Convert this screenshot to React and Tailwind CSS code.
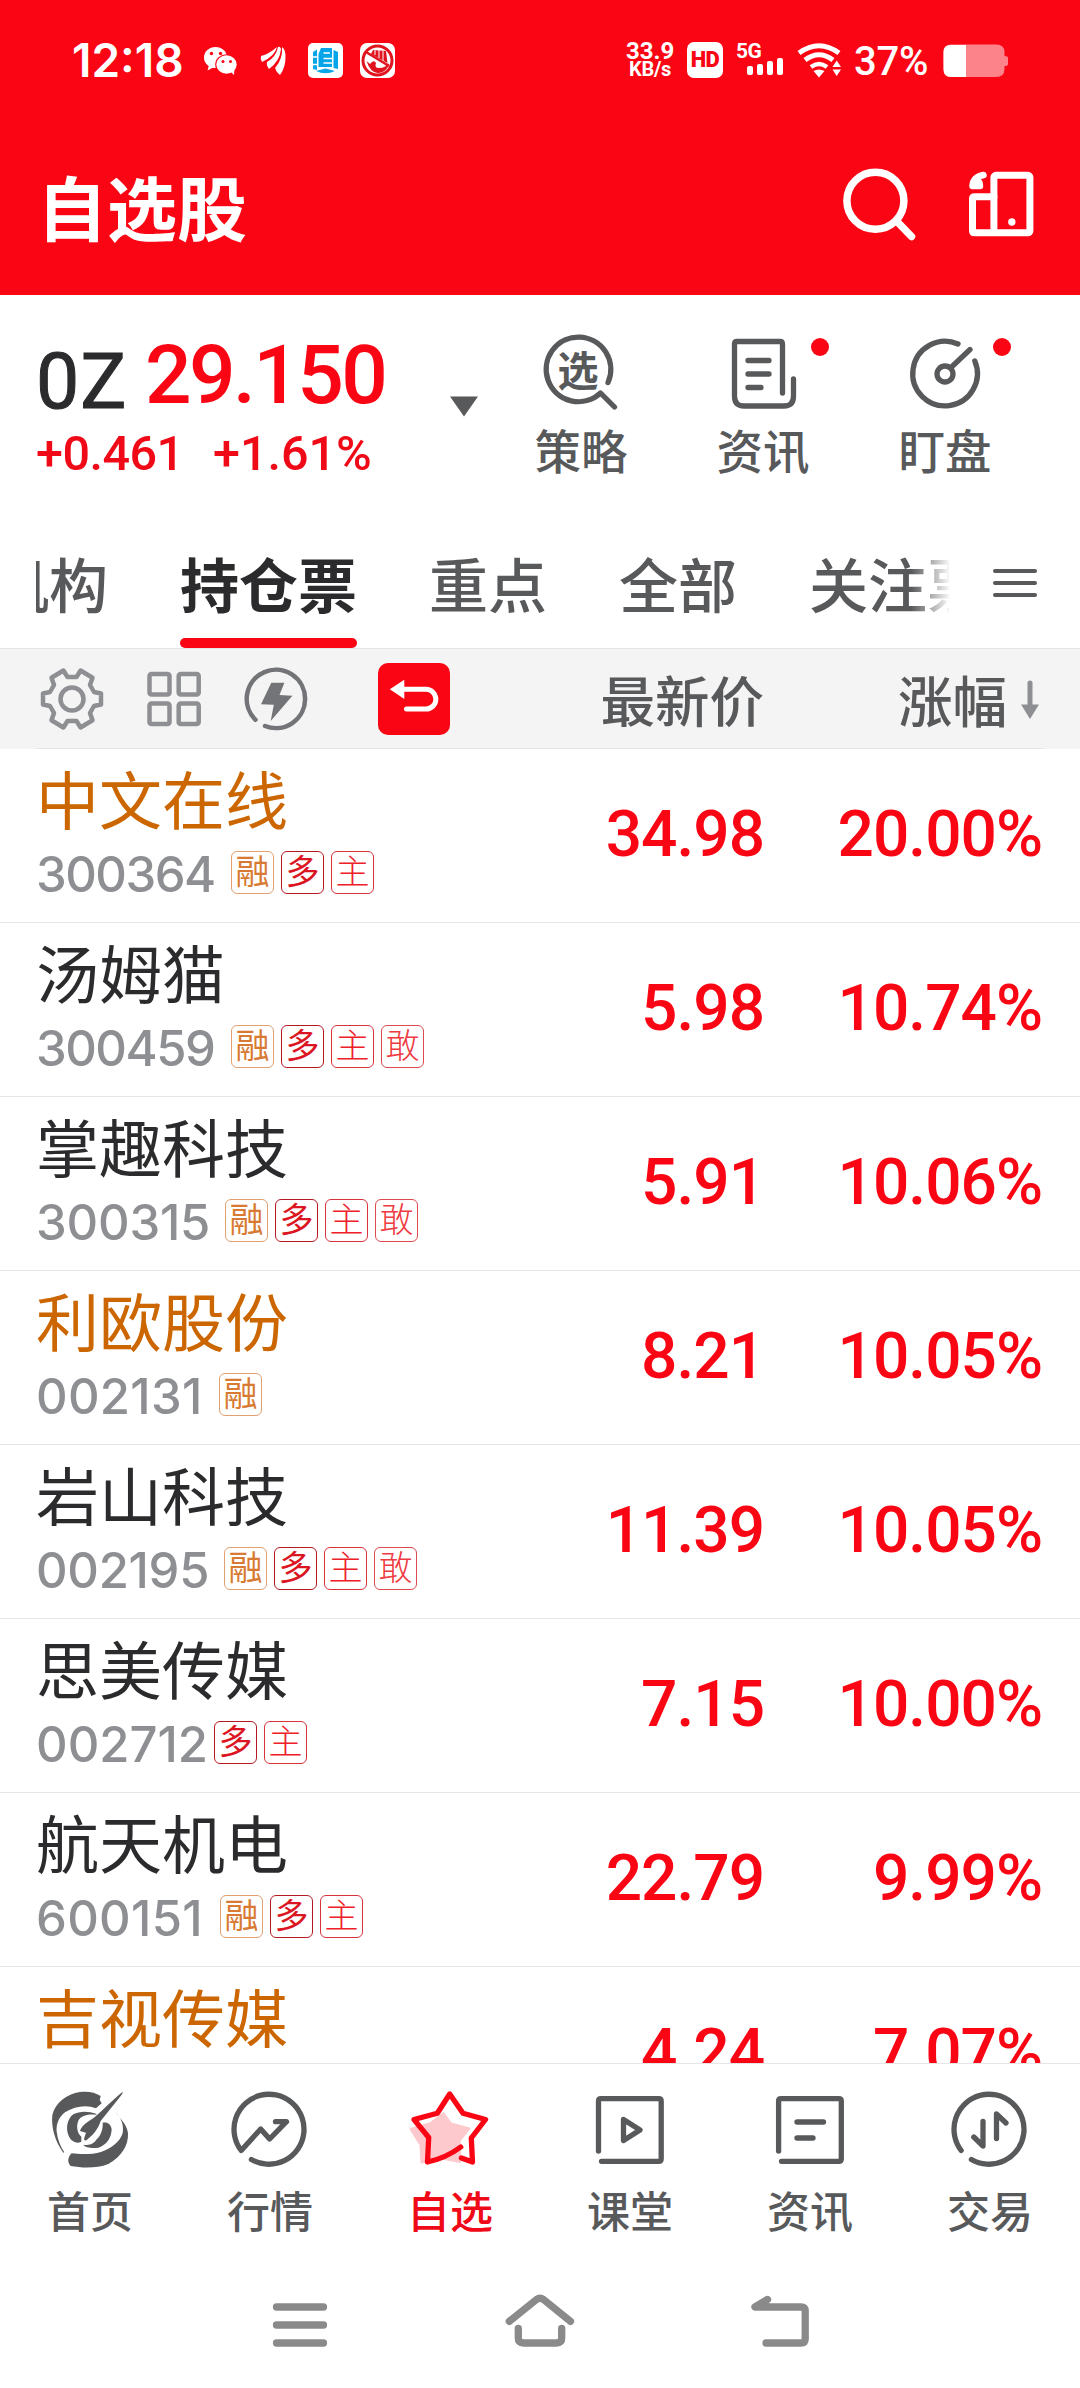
import React from "react";

const CJK = "font-['Noto_Sans_CJK_SC',sans-serif]";
const NUM = "font-['Roboto',sans-serif] font-medium";

function Signal() {
  return (
    <div className="flex items-center text-white">
      <div className="w-[48px] text-center font-['Roboto',sans-serif] font-bold">
        <div className="text-[24px] leading-[20px]">33.9</div>
        <div className="text-[20px] leading-[17px] tracking-[-0.3px]">KB/s</div>
      </div>
      <div className="ml-[13px] flex h-[36px] w-[36px] items-center justify-center rounded-[7px] bg-white font-['Roboto',sans-serif] text-[22px] font-black leading-none tracking-[-0.5px] text-[#fa0513]">
        HD
      </div>
      <div className="ml-[13px] h-[36px] w-[47px]">
        <div className="font-['Roboto',sans-serif] text-[21px] font-bold leading-[18px] tracking-[-0.5px]">5G</div>
        <div className="flex h-[15px] items-end justify-end gap-[4px]">
          <span className="h-[9px] w-[6px] rounded-[2px] bg-white" />
          <span className="h-[11px] w-[6px] rounded-[2px] bg-white" />
          <span className="h-[14px] w-[6px] rounded-[2px] bg-white" />
          <span className="h-[17px] w-[6px] rounded-[2px] bg-white" />
        </div>
      </div>
      <svg className="ml-[13px] h-[36px] w-[46px]" viewBox="795 41 46 36" fill="none" stroke="#fff" strokeWidth="5">
        <path d="M798 52 Q818 37.500 838 52" />
        <path d="M804 59 Q818 48.500 832 59" />
        <path d="M810 66 Q818 60 826 66" strokeWidth="4.500" />
        <path d="M812.500 70 Q818 67 823.500 70 L818 76.500Z" fill="#fff" stroke="none" />
        <path d="M831.500 66 L835.700 59.500 L840 66Z M831.500 68.500 L840 68.500 L835.700 75Z" fill="#fff" stroke="none" />
      </svg>
      <div className="ml-[12px] mt-[4px] w-[79px] font-['Roboto',sans-serif] text-[40px] font-medium leading-[40px] tracking-[-0.2px]">37%</div>
      <svg className="ml-[10px] mt-[3px] h-[34px] w-[66px]" viewBox="943 44 66 34">
        <path d="M951 44.500 H996 Q1004.500 44.500 1004.500 52 V56 Q1008 56 1008 58 V64 Q1008 66 1004.500 66 V69 Q1004.500 77 996 77 H951 Q943.500 77 943.500 69 V52 Q943.500 44.500 951 44.500Z" fill="#fd838a" />
        <path d="M966 45 H951 Q943.500 45 943.500 52 V69 Q943.500 77 951 77 H966Z" fill="#fff" />
      </svg>
    </div>
  );
}

function StatusBar() {
  return (
    <div className="flex h-[119px] items-center justify-between pl-[72px] pr-[71px]">
      <div className="flex items-center">
        <div className="w-[132px] font-['Inter',sans-serif] text-[46px] font-semibold leading-none tracking-[0px] text-white">12:18</div>
        <svg className="h-[36px] w-[192px]" viewBox="204 41 192 36">
          <g fill="#fff">
            <ellipse cx="215.500" cy="56.500" rx="11.500" ry="10.500" />
            <path d="M209 64 L207.500 69.500 L214 66Z" />
            <ellipse cx="226.500" cy="63.500" rx="11.300" ry="10.300" fill="#fa0513" />
            <ellipse cx="226.500" cy="63.500" rx="10.200" ry="9.200" />
            <path d="M230 70 L234 74 L234.500 68Z" />
          </g>
          <g fill="#fa0513">
            <circle cx="211.500" cy="52.500" r="1.700" />
            <circle cx="220.500" cy="52.500" r="1.700" />
            <circle cx="223" cy="60.500" r="1.500" />
            <circle cx="230.500" cy="60.500" r="1.500" />
          </g>
          <g fill="#fff">
            <path d="M261 55 Q269 53 277 46 Q275 55 262 61 Q260 58 261 55Z" />
            <path d="M278 46 Q280 45 281 48 Q280 60 269 68 Q266 64 267 61 Q276 56 278 46Z" />
            <path d="M282 46 Q285 48 285.500 54 Q286 66 280 74 Q276 71 275 67 Q283 58 282 46Z" />
          </g>
          <rect x="308" y="42" width="35" height="35" rx="5" fill="#fff" />
          <path d="M313 51 L317 48.500 V69 L313 68Z M318.500 53 L321 47 H332 V66 H318.500Z M333.500 49 L338 51 V68 L333.500 67Z M316 70 L325.500 67.500 L335 70 Q325.500 74.500 316 70Z" fill="#06a4e8" />
          <path d="M323.500 52 H330 M323.500 57.500 H332 M323.500 62 H332 M313 56 H317 M313 63.500 H317" stroke="#fff" strokeWidth="1.300" fill="none" />
          <rect x="360" y="42" width="35" height="35" rx="7" fill="#fff" />
          <circle cx="377.500" cy="59.500" r="14.500" fill="none" stroke="#e1131d" strokeWidth="3" />
          <path d="M366.500 60 L370 63 Q374 58 376 62 Q374 67 379 67 Q386 67 388 62 L389 64 Q385 72.500 377.500 72 Q370 71 366.500 60Z M371 53 L373 49 L386 50 L387.500 62Z" fill="#e1131d" />
          <path d="M375 49 V54 M379 49 V57 M383 50 V60" stroke="#fff" strokeWidth="1" />
          <path d="M366 51 L389 65" stroke="#e1131d" strokeWidth="2.500" />
        </svg>
      </div>
      <Signal />
    </div>
  );
}

function Header() {
  return (
    <div className="flex h-[176px] items-center justify-between pb-[6px] pl-[37px] pr-[45px]">
      <h1 className={`${CJK} pt-[3px] text-[70px] font-bold leading-[80px] text-white`}>自选股</h1>
      <div className="flex items-center gap-[51px]">
        <svg className="h-[74px] w-[74px]" viewBox="842 168 74 74" fill="none" stroke="#fff" strokeWidth="7.500" strokeLinecap="round">
          <circle cx="875.400" cy="201.700" r="28.500" />
          <path d="M897.500 223 L911.500 237.500" />
        </svg>
        <svg className="h-[74px] w-[68px]" viewBox="967 168 68 74" fill="none" stroke="#fff" strokeWidth="7" strokeLinejoin="round" strokeLinecap="round">
          <rect x="993.900" y="176.300" width="36" height="57.500" rx="2" />
          <path d="M993.900 197.700 H974.500 Q972.500 197.700 972.500 199.700 V231.800 Q972.500 233.800 974.500 233.800 H993.900" />
          <circle cx="1011.800" cy="223" r="3.700" fill="#fff" stroke="none" />
          <path d="M983.500 176 Q973 178 972.500 187 L980 187 Q980 181 976.500 183" strokeWidth="6.500" />
        </svg>
      </div>
    </div>
  );
}

function Tool({ label, dot, children, viewBox }) {
  return (
    <div className="flex w-[182px] flex-none flex-col items-center">
      <svg className="h-[90px] w-[182px]" viewBox={viewBox} fill="none" stroke="#58595b" strokeWidth="5.300" strokeLinecap="round" strokeLinejoin="round">
        {children}
        {dot && <circle cx={dot} cy="347" r="9" fill="#fa0513" stroke="none" />}
      </svg>
      <div className={`${CJK} mt-[8px] text-[46.500px] font-medium leading-[52px] text-[#58595b]`}>{label}</div>
    </div>
  );
}

function Quote() {
  return (
    <div className="flex h-[245px] pt-[30px]">
      <div className="w-[450px] flex-none pl-[36px]">
        <div className={`${NUM} flex items-start whitespace-nowrap pt-[5px]`}>
          <span className="mt-[7px] w-[109px] text-[77px] font-normal leading-[90px] tracking-[1px] text-[#2b2b2d] [-webkit-text-stroke:1px_#2b2b2d]">0Z</span>
          <span className="text-[82px] leading-[90px] tracking-[-2.600px] text-[#fa0513]">29.150</span>
        </div>
        <div className={`${NUM} -mt-[4px] flex whitespace-nowrap text-[48.500px] leading-[62px] text-[#f00a18]`}>
          <span className="w-[177px] tracking-[-0.500px]">+0.461</span>
          <span>+1.61%</span>
        </div>
      </div>
      <svg className="mt-[71px] mr-[12px] h-[21px] w-[28px] flex-none" viewBox="0 0 28 21">
        <path d="M0 0.500 H28 L14 20.500Z" fill="#58595b" />
      </svg>
      <Tool label="策略" viewBox="490 325 182 90">
        <path d="M608 382.500 A32.300 32.300 0 1 0 600.500 393 L614.500 407" />
        <text x="578" y="385.500" textAnchor="middle" fontSize="41" fontWeight="700" fill="#58595b" stroke="none" fontFamily="Noto Sans CJK SC">选</text>
      </Tool>
      <Tool label="资讯" viewBox="672 325 182 90" dot="820">
        <path d="M782.500 393 V344 Q782.500 341.500 780 341.500 H737 Q734.500 341.500 734.500 344 V396 Q734.500 406 744 406 H784 Q793.500 406 793.500 396 V379" />
        <path d="M748 360.500 H769 M748 374 H769 M748 387.500 H761" />
      </Tool>
      <Tool label="盯盘" viewBox="854 325 182 90" dot="1002">
        <path d="M958 344 A32.300 32.300 0 1 0 974.800 361" />
        <circle cx="945" cy="374" r="8" />
        <path d="M951 367.500 L970 349.500" />
      </Tool>
    </div>
  );
}

function Tabs() {
  return (
    <div className={`${CJK} flex h-[108px] items-start text-[59px] font-medium text-[#58595b]`}>
      <div className="ml-[36px] h-[108px] w-[913px] overflow-hidden [mask-image:linear-gradient(to_right,#000_875px,transparent_915px)]">
        <div className="-ml-[46px] flex gap-[72px] whitespace-nowrap leading-[84px]">
          <span className="pt-[1px]">机构</span>
          <div className="flex h-[108px] flex-col justify-between font-bold text-[#2b2b2d]">
            <span className="pt-[1px]">持仓票</span>
            <span className="h-[10px] rounded-full bg-[#fa0513]" />
          </div>
          <span className="pt-[1px]">重点</span>
          <span className="pt-[1px]">全部</span>
          <span className="pt-[1px]">关注票</span>
        </div>
      </div>
      <div className="ml-[44px] mt-[29px] flex flex-col gap-[8px]">
        <span className="h-[4px] w-[44px] rounded-full bg-[#58595b]" />
        <span className="h-[4px] w-[44px] rounded-full bg-[#58595b]" />
        <span className="h-[4px] w-[44px] rounded-full bg-[#58595b]" />
      </div>
    </div>
  );
}

function Toolbar() {
  return (
    <div className="h-[101px] border-t border-[#e5e5e5] bg-[#f4f4f4]">
      <div className="mx-[36px] flex h-[100px] items-center justify-between border-b border-[#e5e5e5]">
        <div className="flex items-center">
          <svg className="h-[74px] w-[272px]" viewBox="36 661 272 74" fill="none" stroke="#8e8f93" strokeWidth="4.500" strokeLinejoin="round">
            <path d="M63.400 669.500 L67.500 676 L76.500 676 L80.600 669.500 L92.500 676.700 L90 684 L94 691 L101 692.500 L101 703.500 L94 705 L90 712 L92.500 719.300 L80.600 726.500 L76.500 720 L67.500 720 L63.400 726.500 L51.500 719.300 L54 712 L50 705 L43 703.500 L43 692.500 L50 691 L54 684 L51.500 676.700Z" />
            <circle cx="72" cy="698" r="11.500" />
            <rect x="149.500" y="673" width="20" height="20.500" rx="2" />
            <rect x="178.700" y="673" width="20" height="20.500" rx="2" />
            <rect x="149.500" y="702.500" width="20" height="20.500" rx="2" />
            <rect x="178.700" y="702.500" width="20" height="20.500" rx="2" />
            <path d="M255.500 718.800 A29.200 29.200 0 1 1 265 725" stroke="#737477" strokeLinecap="round" />
            <path d="M271.300 681.700 L284.400 681.700 L279.500 694 L292.400 694.700 L270.700 720 L273.800 703.700 L261 703.300Z" fill="#737477" stroke="none" />
          </svg>
          <svg className="ml-[69px] h-[74px] w-[74px]" viewBox="377 661 74 74">
            <rect x="378" y="662" width="72" height="72" rx="10" fill="#fa0513" />
            <path d="M403 688.300 H426 A9.800 9.800 0 0 1 426 708 H406.500" fill="none" stroke="#fff" strokeWidth="5" strokeLinecap="round" />
            <path d="M389.800 688.300 L404.300 678.700 V698Z" fill="#fff" />
          </svg>
        </div>
        <div className={`${CJK} flex items-center text-[54.500px] font-medium leading-[80px] text-[#58595b]`}>
          <span>最新价</span>
          <span className="ml-[134px]">涨幅</span>
          <svg className="ml-[13px] mr-[4px] h-[42px] w-[20px]" viewBox="1020 677 20 42">
            <path d="M1030 682 V706" stroke="#8e8f93" strokeWidth="5" strokeLinecap="round" />
            <path d="M1021 703.500 H1039 L1030 718Z" fill="#8e8f93" />
          </svg>
        </div>
      </div>
    </div>
  );
}

const TAG_STYLES = {
  融: "font-normal border-[#e0a070] text-[#d87a33]",
  多: "font-normal border-[#b51a22] text-[#dc1522]",
  主: "font-light border-[#d8323a] text-[#ee2028]",
  敢: "font-light border-[#dc4a50] text-[#ee3a40]",
};

const STOCKS = [
  { name: "中文在线", code: "300364", tags: "融多主", price: "34.98", change: "20.00%", hot: true, pad: "w-[195px] tracking-[-1.500px]" },
  { name: "汤姆猫", code: "300459", tags: "融多主敢", price: "5.98", change: "10.74%", pad: "w-[195px] tracking-[-1.500px]" },
  { name: "掌趣科技", code: "300315", tags: "融多主敢", price: "5.91", change: "10.06%", pad: "w-[189px] tracking-[-0.200px]" },
  { name: "利欧股份", code: "002131", tags: "融", price: "8.21", change: "10.05%", hot: true, pad: "w-[183px] tracking-[0.300px]" },
  { name: "岩山科技", code: "002195", tags: "融多主敢", price: "11.39", change: "10.05%", pad: "w-[188px] tracking-[-0.300px]" },
  { name: "思美传媒", code: "002712", tags: "多主", price: "7.15", change: "10.00%", pad: "w-[178px]" },
  { name: "航天机电", code: "600151", tags: "融多主", price: "22.79", change: "9.99%", pad: "w-[184px] tracking-[0.300px]" },
  { name: "吉视传媒", code: "", tags: "", price: "4.24", change: "7.07%", hot: true, pad: "w-[184px]" },
];

function StockRow({ stock }) {
  return (
    <div className="flex h-[174px] border-b border-[#e5e5e5] pl-[36px] pr-[38px]">
      <div className="flex-1 pt-[16px]">
        <div className={`${CJK} text-[63px] leading-[64px] ${stock.hot ? "text-[#cc6600]" : "text-[#2b2b2d]"}`}>{stock.name}</div>
        <div className="mt-[21px] flex h-[44px] items-center">
          <span className={`${stock.pad} pt-[5px] font-['Inter',sans-serif] text-[49px] font-medium leading-[44px] text-[#8e8f93]`}>{stock.code}</span>
          <div className="flex gap-[7px]">
            {[...stock.tags].map((t) => (
              <span key={t} className={`${CJK} flex h-[43px] w-[43px] items-center justify-center rounded-[6px] border-[1.500px] pb-[4px] text-[34px] leading-[36px] ${TAG_STYLES[t]}`}>
                {t}
              </span>
            ))}
          </div>
        </div>
      </div>
      <div className={`${NUM} flex h-[171px] items-center text-right text-[64px] tracking-[-1px] text-[#fa0513]`}>
        <span className="w-[200px]">{stock.price}</span>
        <span className="w-[278px]">{stock.change}</span>
      </div>
    </div>
  );
}

function NavItem({ label, viewBox, active, children }) {
  return (
    <div className="flex w-[180px] flex-col items-center">
      <svg className="h-[84px] w-[180px]" viewBox={viewBox} fill="none" stroke={active ? "#fa0513" : "#58595b"} strokeWidth="5.300" strokeLinecap="round" strokeLinejoin="round">
        {children}
      </svg>
      <div className={`${CJK} mt-[11px] text-[43px] font-medium leading-[52px] ${active ? "text-[#f00a18]" : "text-[#58595b]"}`}>{label}</div>
    </div>
  );
}

function BottomNav() {
  return (
    <div className="flex h-[207px] border-t border-[#e5e5e5] pt-[24px]">
      <NavItem label="首页" viewBox="0 2088 180 84">
        <g transform="translate(40 2080) scale(0.3333)" fill="#58595b" stroke="none">
          <path d="M70 218 C45 185 33 140 37 105 C45 70 80 42 120 36 C145 33 165 37 182 48 L179 60 L185 70 L168 85 C140 74 105 78 75 97 C58 110 48 130 50 155 C53 180 62 200 73 217Z" />
          <path d="M95 220 C115 222 150 226 185 215 C215 205 240 185 248 160 C252 135 245 115 226 95 C250 125 262 140 264 160 C266 195 245 230 205 252 C170 266 125 264 92 258 C82 248 82 232 95 220Z" />
          <path d="M247 36 C250 38 245 45 235 57 L182 123 C174 148 160 165 140 180 C136 184 129 180 134 170 L138 158 L120 153 C125 140 135 130 155 118 C175 105 200 75 247 36Z" />
          <path d="M170 102 C145 93 120 92 100 103 C80 118 76 150 88 172 C98 188 112 192 124 185 L124 170 C112 160 108 140 115 122 C122 108 140 101 168 104Z" />
          <path d="M188 128 C202 125 213 132 215 148 C214 174 200 195 175 203 C155 206 135 202 130 194 C150 198 163 190 170 178 C182 168 190 145 188 128Z" />
        </g>
      </NavItem>
      <NavItem label="行情" viewBox="180 2088 180 84">
        <path d="M251.400 2159.500 A35 35 0 1 0 241.200 2150.500 L260.700 2129 L269.600 2139 L286.500 2121.700 H275.500" />
      </NavItem>
      <NavItem label="自选" viewBox="360 2088 180 84" active>
        <path d="M443.500 2113 L451 2123.500 L469.500 2128.500 L459.700 2140.700 L460 2162 L440.800 2158.300 L421.500 2162.500 L420.500 2145 L410.500 2129 L430.400 2123.300Z" fill="#fdc9cc" stroke="#fdc9cc" strokeWidth="2" />
        <path d="M461.400 2158 L472.500 2162 L471.300 2138 L485.500 2119.500 L463 2113.300 L449.700 2094 L437.300 2113.300 L414 2119.500 L428.700 2137.500 L427.500 2162 Q446 2158 460.700 2147" />
      </NavItem>
      <NavItem label="课堂" viewBox="540 2088 180 84">
        <path d="M598.500 2151 V2101 Q598.500 2098.700 601 2098.700 H658.700 Q661.200 2098.700 661.200 2101 V2159 Q661.200 2161.300 658.700 2161.300 H601.500" />
        <path d="M623.500 2119.500 L640 2130 L623.500 2140.500Z" />
      </NavItem>
      <NavItem label="资讯" viewBox="720 2088 180 84">
        <path d="M778.600 2151 V2101 Q778.600 2098.700 781 2098.700 H838.800 Q841.300 2098.700 841.300 2101 V2159 Q841.300 2161.300 838.800 2161.300 H781.500" />
        <path d="M797 2122 H823.500 M797 2138 H813" />
      </NavItem>
      <NavItem label="交易" viewBox="900 2088 180 84">
        <path d="M971.400 2159.500 A35 35 0 1 0 961.200 2150.500" />
        <path d="M983 2121.500 V2146 L973.800 2137 M996.500 2138.500 V2114 L1006 2123" />
      </NavItem>
    </div>
  );
}

function SystemNav() {
  return (
    <div className="flex h-[118px] items-start justify-center gap-[168px] pt-[18px]">
      <svg className="h-[64px] w-[66px]" viewBox="267 2288 66 64" fill="none" stroke="#8a8a8a" strokeWidth="7.300" strokeLinecap="round">
        <path d="M276.500 2307 H323.500 M276.500 2325 H323.500 M276.500 2343 H323.500" />
      </svg>
      <svg className="h-[64px] w-[78px]" viewBox="501 2288 78 64" fill="none" stroke="#8a8a8a" strokeWidth="7.300" strokeLinecap="round" strokeLinejoin="round">
        <path d="M509.300 2321.300 L536.500 2299.500 Q540 2297 543.500 2299.500 L570.500 2321.300" />
        <path d="M518.300 2328.500 V2338 Q518.300 2343 523.500 2343 H556.500 Q561.700 2343 561.700 2338 V2328.500" />
      </svg>
      <svg className="h-[64px] w-[66px]" viewBox="747 2288 66 64" fill="none" stroke="#8a8a8a" strokeWidth="7.300" strokeLinecap="round" strokeLinejoin="round">
        <path d="M767.500 2299.500 L755 2307 H801 Q805.200 2307 805.200 2311 V2339 Q805.200 2343 801 2343 H766" />
      </svg>
    </div>
  );
}

export default function App() {
  return (
    <div className="h-[2388px] w-[1080px] overflow-hidden bg-white">
      <div className="bg-[#fa0513]">
        <StatusBar />
        <Header />
      </div>
      <Quote />
      <Tabs />
      <Toolbar />
      <div className="h-[1314px] overflow-hidden">
        {STOCKS.map((s) => (
          <StockRow key={s.name} stock={s} />
        ))}
      </div>
      <BottomNav />
      <SystemNav />
    </div>
  );
}
